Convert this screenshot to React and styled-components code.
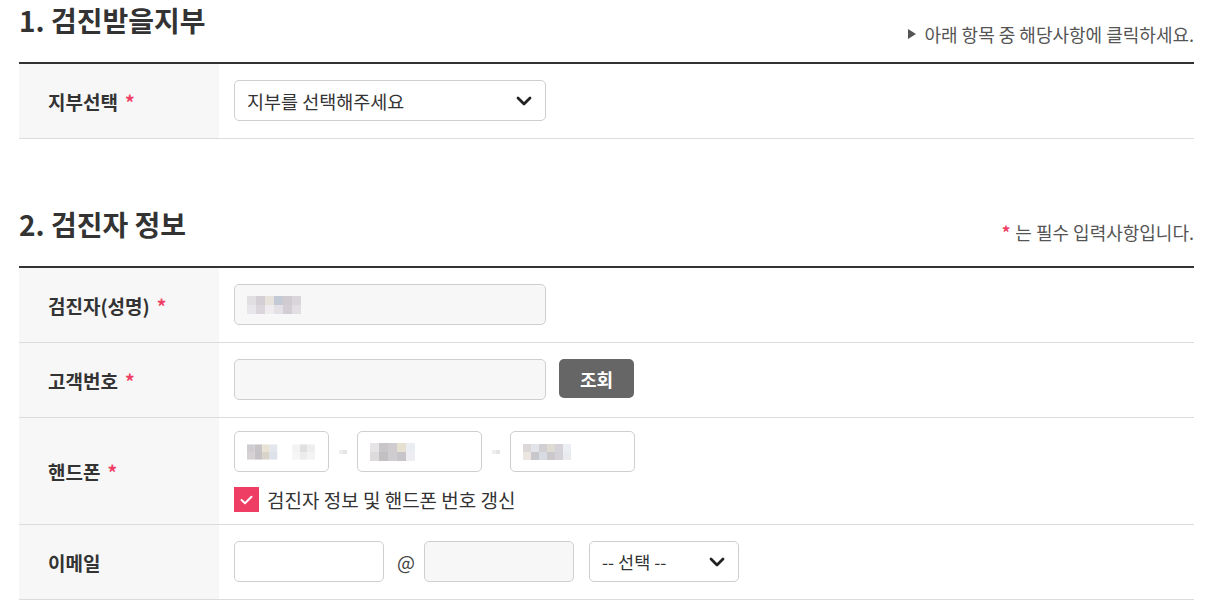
import React from "react";
import styled, { createGlobalStyle } from "styled-components";

const Global = createGlobalStyle`
  html, body { margin: 0; padding: 0; background: #fff; }
  body { font-family: "Noto Sans CJK KR", "Noto Sans", sans-serif; color: #333; }
  * { box-sizing: border-box; }
`;

const Page = styled.div`
  padding: 0 30px 0 19px;
  width: 1224px;
`;

const Section = styled.section`
  margin-top: ${(p) => p.$top}px;
`;

const Header = styled.div`
  display: flex;
  justify-content: space-between;
  align-items: flex-end;
  height: 64px;
  border-bottom: 2px solid #333;
`;

const Title = styled.h2`
  margin: 0;
  align-self: flex-start;
  font-size: 28px;
  font-weight: 700;
  line-height: 40px;
  color: #333;
`;

const Note = styled.p`
  margin: 0 0 ${(p) => p.$pb}px;
  font-size: 18px;
  line-height: 24px;
  color: #555;
  display: flex;
  align-items: center;
  gap: 5px;
`;

const Tri = styled.span`
  width: 0;
  height: 0;
  border-left: 8px solid #555;
  border-top: 5px solid transparent;
  border-bottom: 5px solid transparent;
  margin-right: 3px;
`;

const Star = styled.span`
  color: #ef3e63;
  font-weight: 700;
  font-size: ${(p) => p.$size || 19}px;
`;

const Row = styled.div`
  display: grid;
  grid-template-columns: 200px 1fr;
  border-bottom: 1px solid #dcdcdc;
`;

const Label = styled.div`
  background: #f7f7f7;
  display: flex;
  align-items: center;
  gap: 7px;
  padding-left: 29px;
  font-size: 19px;
  font-weight: 700;
  color: #333;
`;

const Cell = styled.div`
  padding: ${(p) => (p.$tight ? "13px 15px 12px" : "16px 15px 17px")};
  display: flex;
  flex-direction: column;
  gap: 15px;
`;

const Line = styled.div`
  display: flex;
  align-items: center;
  gap: ${(p) => p.$gap || 13}px;
`;

const Box = styled.div`
  width: ${(p) => p.$w}px;
  height: 41px;
  flex: none;
  border: 1px solid #cfcfcf;
  border-radius: 5px;
  background: ${(p) => (p.$gray ? "#f7f7f7" : "#fff")};
  display: flex;
  align-items: center;
  justify-content: space-between;
  padding: 0 13px 0 12px;
  font-size: ${(p) => p.$fs || 18.5}px;
  color: #333;
  margin-left: ${(p) => p.$ml || 0}px;
`;

const Dash = styled.span`
  width: 8px;
  display: flex;
  justify-content: center;
`;

const Button = styled.button`
  height: 39px;
  width: 75px;
  border: none;
  border-radius: 5px;
  background: #666;
  color: #fff;
  font-family: inherit;
  font-size: 18px;
  font-weight: 700;
  align-self: flex-start;
`;

const Check = styled.span`
  width: 25px;
  height: 25px;
  flex: none;
  background: #ef3e63;
  display: inline-flex;
  align-items: center;
  justify-content: center;
`;

const CheckText = styled.span`
  font-size: 19px;
  line-height: 25px;
  color: #333;
`;

const At = styled.span`
  font-size: 19px;
  color: #444;
  width: 14px;
  text-align: center;
`;

const Chevron = () => (
  <svg width="16" height="10" viewBox="0 0 16 10">
    <path d="M2 2 L8 8 L14 2" fill="none" stroke="#222" strokeWidth="2.8" strokeLinecap="round" strokeLinejoin="round" />
  </svg>
);

const Mosaic = ({ cells, size = 9 }) => {
  const rows = cells.length;
  const cols = Math.max(...cells.map((r) => r.length));
  return (
    <svg width={cols * size} height={rows * size} viewBox={`0 0 ${cols * size} ${rows * size}`} aria-hidden="true">
      {cells.map((r, y) =>
        r.map((c, x) =>
          c ? <rect key={`${x}-${y}`} x={x * size} y={y * size} width={size} height={size} fill={c} /> : null
        )
      )}
    </svg>
  );
};

const nameCells = [
  ["#e2dfe3", "#d3cfd4", "#e7e3dc", "#c3c9d5", "#cfcbd0", "#d9d5da"],
  ["#e8e6ea", "#dad6db", "#eeecee", "#e3e1e5", "#d2ced3", "#e1dfe3"],
];
const phone1 = [
  ["#cfcdd0", "#c7c4c8", "#e8e2d5", "#e4e6ee", null, null, "#f3f3f3", "#e0e0e0", "#eeeeee"],
  ["#d6d2d3", "#c5c2c6", "#d8d4cc", "#dde1ea", null, null, "#f5f5f5", "#ececec", "#f3f3f3"],
];
const phone2 = [
  ["#e6e4e6", "#c9c6ca", "#cfcbcf", "#e6e0d2", "#eaedf2"],
  ["#dedbdd", "#c3c0c4", "#d0cdd1", "#c8c5ca", "#eeeef2"],
];
const phone3 = [
  ["#dcd8d8", "#e2e4ea", "#d2cfd3", "#dedbd3", "#d5d3d8", "#ebeef2"],
  ["#ebe6e0", "#c8c8cc", "#d9dbe2", "#cbc8cc", "#d4d2d6", "#e9ebef"],
];
const dashCells = [["#eeeeee", "#e4e4e4"]];

export default function App() {
  return (
    <Page>
      <Global />
      <Section $top={0}>
        <Header>
          <Title>1. 검진받을지부</Title>
          <Note $pb={16}><Tri />아래 항목 중 해당사항에 클릭하세요.</Note>
        </Header>
        <Row>
          <Label>지부선택 <Star>*</Star></Label>
          <Cell>
            <Box $w={312}>지부를 선택해주세요<Chevron /></Box>
          </Cell>
        </Row>
      </Section>

      <Section $top={65}>
        <Header>
          <Title>2. 검진자 정보</Title>
          <Note $pb={22}><Star $size={17}>*</Star>는 필수 입력사항입니다.</Note>
        </Header>
        <Row>
          <Label>검진자(성명) <Star>*</Star></Label>
          <Cell>
            <Box $w={312} $gray><Mosaic cells={nameCells} /></Box>
          </Cell>
        </Row>
        <Row>
          <Label>고객번호 <Star>*</Star></Label>
          <Cell>
            <Line>
              <Box $w={312} $gray />
              <Button>조회</Button>
            </Line>
          </Cell>
        </Row>
        <Row>
          <Label>핸드폰 <Star>*</Star></Label>
          <Cell $tight>
            <Line $gap={10}>
              <Box $w={95}>
                <Mosaic cells={phone1} size={8} />
              </Box>
              <Dash><Mosaic cells={dashCells} size={6} /></Dash>
              <Box $w={125}><Mosaic cells={phone2} size={9} /></Box>
              <Dash><Mosaic cells={dashCells} size={6} /></Dash>
              <Box $w={125}><Mosaic cells={phone3} size={8} /></Box>
            </Line>
            <Line $gap={8}>
              <Check>
                <svg width="13" height="10" viewBox="0 0 13 10">
                  <path d="M1.5 5 L5 8.2 L11.5 1.8" fill="none" stroke="#fff" strokeWidth="2" strokeLinecap="round" strokeLinejoin="round" />
                </svg>
              </Check>
              <CheckText>검진자 정보 및 핸드폰 번호 갱신</CheckText>
            </Line>
          </Cell>
        </Row>
        <Row>
          <Label>이메일</Label>
          <Cell>
            <Line $gap={13}>
              <Box $w={150} />
              <At>@</At>
              <Box $w={150} $gray />
              <Box $w={150} $fs={17.5} $ml={2}>-- 선택 --<Chevron /></Box>
            </Line>
          </Cell>
        </Row>
      </Section>
    </Page>
  );
}
